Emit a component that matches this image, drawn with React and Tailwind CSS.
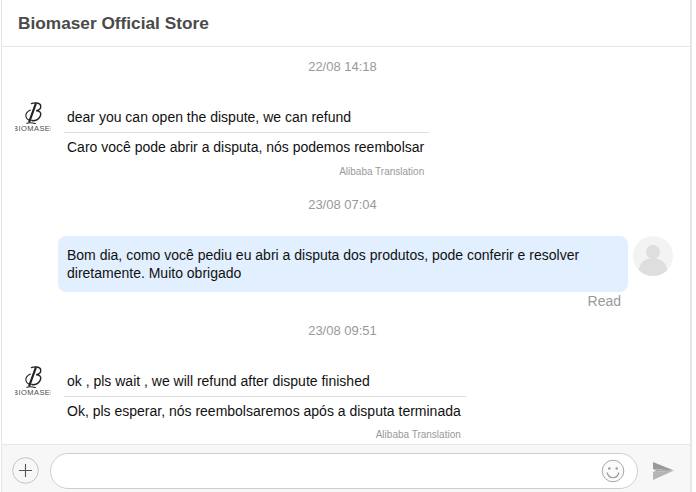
import React from "react";

const font = { fontFamily: '"Liberation Sans", Arial, sans-serif' };

function DateLabel({ children, className = "" }) {
  return <div className={`text-center text-[13px] leading-[14px] text-[#999999] pr-[7px] ${className}`}>{children}</div>;
}

function Logo() {
  return (
    <div className="w-[36px] shrink-0 overflow-hidden -mt-[2px]">
      <svg width="36" height="23" viewBox="0 0 36 23" className="block" aria-hidden="true">
        <g fill="none" stroke="#222222" strokeLinecap="round">
          <path d="M20.7 3L14.3 20.7" strokeWidth="2.2" />
          <path d="M16.5 2.6C19.5 1.4 25.2 1.6 25.7 4.8C26 7.4 24 9.2 21.2 9.7C24.4 9.8 26.4 11.6 25.6 14.2C24.6 17.6 21.4 19.8 17.2 19.8" strokeWidth="1.4" />
          <path d="M15.4 9C12.4 10.4 10.4 13.2 11 15.6C11.6 18.2 14 19.6 17.6 19.2" strokeWidth="1.1" />
          <path d="M11.7 22.2C14.4 21.4 17.6 21.8 20.3 22.6" strokeWidth="1.1" />
        </g>
      </svg>
      <div className="text-[7.5px] leading-[9px] tracking-[0.45px] whitespace-nowrap text-[#4a4a4a] -ml-[2px]">BIOMASER</div>
    </div>
  );
}

function Incoming({ original, translated, className = "", noteClass = "mt-[10px]" }) {
  return (
    <div className={`flex items-start pl-[13px] ${className}`}>
      <Logo />
      <div className="ml-[13px] w-fit">
        <div className="text-[14px] leading-[18px] text-[#111] pl-[3px] pr-[5px] pb-[6px] pt-[5px] border-b border-[#dddddd]">{original}</div>
        <div className="text-[14px] leading-[18px] text-[#111] pl-[3px] pr-[5px] pt-[5px]">{translated}</div>
        <div className={`text-right text-[10px] leading-[12px] text-[#999999] pr-[5px] ${noteClass}`}>Alibaba Translation</div>
      </div>
    </div>
  );
}

export default function App() {
  return (
    <div style={font} className="w-[696px] h-[492px] overflow-hidden bg-white">
      <div className="ml-[1px] w-[691px] h-full flex flex-col border-l border-r-2 border-[#e6e6e6]">
        <header className="h-[47px] shrink-0 border-b border-[#e5e5e5] pl-[16px] pt-[13px]">
          <div className="text-[17.25px] leading-[20px] font-bold text-[#4a4a4a]">Biomaser Official Store</div>
        </header>

        <main className="flex-1 overflow-hidden">
          <DateLabel className="mt-[13px]">22/08 14:18</DateLabel>
          <Incoming
            className="mt-[29px]"
            original="dear you can open the dispute, we can refund"
            translated="Caro você pode abrir a disputa, nós podemos reembolsar"
          />
          <DateLabel className="mt-[20px]">23/08 07:04</DateLabel>

          <div className="flex items-start justify-end mt-[24px] pr-[17px]">
            <div className="w-[570px] h-[56px] rounded-[8px] bg-[#e1efff] px-[9px] py-[10px] text-[14px] leading-[18px] text-[#111]">
              Bom dia, como você pediu eu abri a disputa dos produtos, pode conferir e resolver diretamente. Muito obrigado
            </div>
            <svg className="ml-[5px] shrink-0" width="40" height="40" viewBox="0 0 40 40" aria-hidden="true">
              <defs>
                <clipPath id="av"><circle cx="20" cy="20" r="20" /></clipPath>
              </defs>
              <circle cx="20" cy="20" r="20" fill="#f3f3f3" />
              <circle cx="20" cy="16" r="7" fill="#dedede" />
              <ellipse cx="20" cy="34" rx="14" ry="12" fill="#dedede" clipPath="url(#av)" />
            </svg>
          </div>
          <div className="text-right text-[14px] leading-[16px] text-[#999999] pr-[69px] mt-[1px]">Read</div>

          <DateLabel className="mt-[15px]">23/08 09:51</DateLabel>
          <Incoming
            className="mt-[29px]"
            original="ok , pls wait , we will refund after dispute finished"
            translated="Ok, pls esperar, nós reembolsaremos após a disputa terminada"
            noteClass="mt-[9px]"
          />
        </main>

        <footer className="h-[48px] shrink-0 bg-[#f7f7f7] border-t border-[#e8e8e8] flex items-center pl-[10px] pt-[4px]">
          <svg width="27" height="27" viewBox="0 0 27 27" className="shrink-0" aria-hidden="true">
            <circle cx="13.5" cy="13.5" r="12.8" fill="none" stroke="#c4c4c4" />
            <path d="M13.5 7v13M7 13.5h13" stroke="#555" strokeWidth="1.1" />
          </svg>
          <div className="ml-[11px] w-[588px] h-[36px] rounded-full bg-white border border-[#cfcfcf] flex items-center justify-end pr-[12px]">
            <svg width="24" height="24" viewBox="0 0 24 24" aria-hidden="true">
              <circle cx="12" cy="12" r="10.8" fill="#fafafa" stroke="#a8a8a8" />
              <circle cx="8.3" cy="9.5" r="1.2" fill="#999" />
              <circle cx="15.7" cy="9.5" r="1.2" fill="#999" />
              <path d="M6 13.5c1 3.6 3.4 5.2 6 5.2s5-1.6 6-5.2" fill="none" stroke="#999" strokeWidth="1.1" />
            </svg>
          </div>
          <svg width="22" height="18" viewBox="0 0 22 18" className="ml-[15px] shrink-0" aria-hidden="true">
            <path d="M0 0L21 8.5L0 7Z" fill="#999999" />
            <path d="M0 10L21 8.5L0 18Z" fill="#b5b5b5" />
            <path d="M0 7L21 8.5L0 10L3 8.5Z" fill="#a8a8a8" />
          </svg>
        </footer>
      </div>
    </div>
  );
}
